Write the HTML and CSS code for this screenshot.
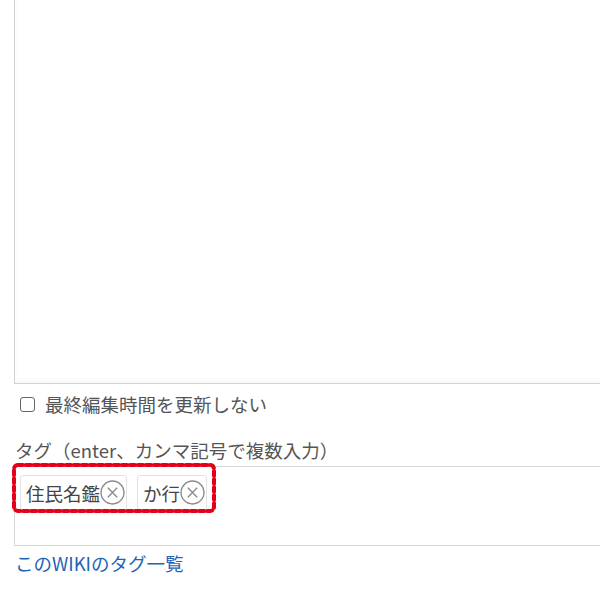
FILE: index.html
```html
<!DOCTYPE html>
<html lang="ja">
<head>
<meta charset="utf-8">
<link rel="stylesheet" href="styles.css">
</head>
<body>
<div class="page">
  <div class="editor"></div>
  <label class="check-row"><span class="checkbox"></span><span>最終編集時間を更新しない</span></label>
  <div class="field-label">タグ（enter、カンマ記号で複数入力）</div>
  <div class="tag-box">
    <div class="tags">
      <span class="chip">住民名鑑<svg class="x" viewBox="0 0 24 24"><circle cx="12" cy="12" r="11"/><path d="M7.5 7.5L16.5 16.5M16.5 7.5L7.5 16.5"/></svg></span>
      <span class="chip">か行<svg class="x" viewBox="0 0 24 24"><circle cx="12" cy="12" r="11"/><path d="M7.5 7.5L16.5 16.5M16.5 7.5L7.5 16.5"/></svg></span>
    </div>
    <svg class="highlight" width="212" height="58" viewBox="0 0 212 58"><rect x="3" y="3" width="200" height="46" rx="4" ry="4"/></svg>
  </div>
  <a class="tag-link" href="#">このWIKIのタグ一覧</a>
  <div class="next-row"><a href="#">ト</a><a href="#" class="far">ト</a></div>
</div>
</body>
</html>
```

FILE: styles.css
```css
html, body {
  margin: 0;
  padding: 0;
  background: #fff;
  overflow: hidden;
}
.page {
  font-family: "Noto Sans CJK JP", "Noto Sans", sans-serif;
  font-size: 18.5px;
  color: #555;
  padding-left: 14px;
  width: 620px;
}
.editor {
  height: 383px;
  border-left: 1px solid #d2d2d2;
  border-bottom: 1px solid #d2d2d2;
  box-shadow: inset 0 -3px 4px rgba(0,0,0,0.03);
}
.check-row {
  display: flex;
  align-items: center;
  gap: 10px;
  padding-left: 6px;
  margin-top: 7px;
  height: 26px;
}
.checkbox {
  width: 13px;
  height: 13px;
  border: 1.5px solid #666;
  border-radius: 3px;
  flex: none;
}
.field-label {
  margin-top: 19px;
  padding-left: 1px;
  height: 28px;
  line-height: 28px;
}
.tag-box {
  position: relative;
  margin-top: 2px;
  height: 78px;
  border: 1px solid #d8d8d8;
  border-right: none;
}
.tags {
  display: flex;
  gap: 10px;
  padding: 8px 0 0 5px;
}
.chip {
  display: inline-flex;
  align-items: center;
  height: 33px;
  padding: 0 1px 0 5px;
  border: 1px solid #e2e2e2;
  border-radius: 3px;
  color: #444;
  font-size: 18.5px;
}
.x {
  width: 25px;
  height: 25px;
  margin-left: 0;
  fill: none;
  stroke: #8a8a8a;
  stroke-width: 1.3;
}
.highlight {
  position: absolute;
  left: -4px;
  top: -5px;
  overflow: visible;
}
.highlight rect {
  fill: none;
  stroke: #e5001a;
  stroke-width: 4;
  stroke-dasharray: 5 3;
  stroke-linecap: round;
}
.tag-link {
  display: block;
  margin-top: 3px;
  padding-left: 1px;
  color: #1d64b8;
  text-decoration: none;
  line-height: 28px;
}
.next-row {
  margin-top: 20px;
  display: flex;
  padding-left: 1px;
  line-height: 28px;
}
.next-row a {
  color: #1d64b8;
  text-decoration: none;
}
.next-row .far {
  margin-left: 125px;
}
```
